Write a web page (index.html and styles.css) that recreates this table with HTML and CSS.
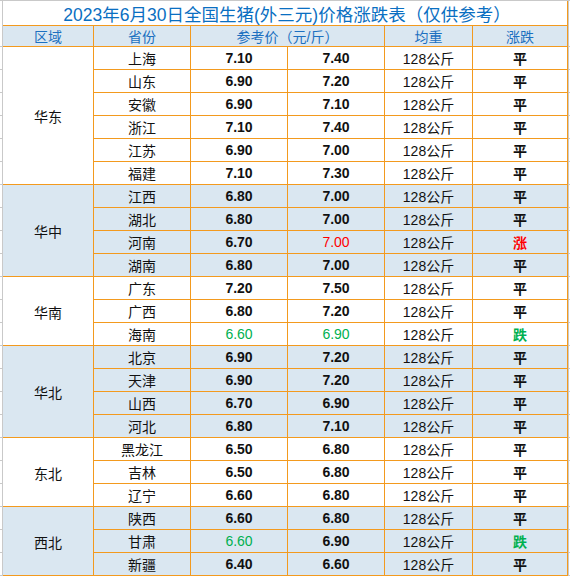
FILE: index.html
```html
<!DOCTYPE html>
<html lang="zh-CN">
<head>
<meta charset="utf-8">
<title>2023年6月30日全国生猪价格涨跌表</title>
<link rel="stylesheet" href="styles.css">
</head>
<body>
<div class="sheet">
  <div class="g gl gt"></div>
  <div class="c title">2023年6月30日全国生猪(外三元)价格涨跌表（仅供参考）</div>
  <div class="g gr gt"></div>

  <div class="g gl"></div>
  <div class="c hd b">区域</div>
  <div class="c hd b">省份</div>
  <div class="c hd b span2">参考价（元/斤）</div>
  <div class="c hd b">均重</div>
  <div class="c hd b">涨跌</div>
  <div class="g gr"></div>

  <!-- 华东 -->
  <div class="g gl"></div>
  <div class="c region r6">华东</div>
  <div class="c">上海</div><div class="c p">7.10</div><div class="c p">7.40</div><div class="c">128公斤</div><div class="c t">平</div>
  <div class="g gr"></div>
  <div class="g gl"></div>
  <div class="c">山东</div><div class="c p">6.90</div><div class="c p">7.20</div><div class="c">128公斤</div><div class="c t">平</div>
  <div class="g gr"></div>
  <div class="g gl"></div>
  <div class="c">安徽</div><div class="c p">6.90</div><div class="c p">7.10</div><div class="c">128公斤</div><div class="c t">平</div>
  <div class="g gr"></div>
  <div class="g gl"></div>
  <div class="c">浙江</div><div class="c p">7.10</div><div class="c p">7.40</div><div class="c">128公斤</div><div class="c t">平</div>
  <div class="g gr"></div>
  <div class="g gl"></div>
  <div class="c">江苏</div><div class="c p">6.90</div><div class="c p">7.00</div><div class="c">128公斤</div><div class="c t">平</div>
  <div class="g gr"></div>
  <div class="g gl"></div>
  <div class="c">福建</div><div class="c p">7.10</div><div class="c p">7.30</div><div class="c">128公斤</div><div class="c t">平</div>
  <div class="g gr"></div>

  <!-- 华中 -->
  <div class="g gl"></div>
  <div class="c region r4 b">华中</div>
  <div class="c b">江西</div><div class="c p b">6.80</div><div class="c p b">7.00</div><div class="c b">128公斤</div><div class="c t b">平</div>
  <div class="g gr"></div>
  <div class="g gl"></div>
  <div class="c b">湖北</div><div class="c p b">6.80</div><div class="c p b">7.00</div><div class="c b">128公斤</div><div class="c t b">平</div>
  <div class="g gr"></div>
  <div class="g gl"></div>
  <div class="c b">河南</div><div class="c p b">6.70</div><div class="c b red">7.00</div><div class="c b">128公斤</div><div class="c t b red">涨</div>
  <div class="g gr"></div>
  <div class="g gl"></div>
  <div class="c b">湖南</div><div class="c p b">6.80</div><div class="c p b">7.00</div><div class="c b">128公斤</div><div class="c t b">平</div>
  <div class="g gr"></div>

  <!-- 华南 -->
  <div class="g gl"></div>
  <div class="c region r3">华南</div>
  <div class="c">广东</div><div class="c p">7.20</div><div class="c p">7.50</div><div class="c">128公斤</div><div class="c t">平</div>
  <div class="g gr"></div>
  <div class="g gl"></div>
  <div class="c">广西</div><div class="c p">6.80</div><div class="c p">7.20</div><div class="c">128公斤</div><div class="c t">平</div>
  <div class="g gr"></div>
  <div class="g gl"></div>
  <div class="c">海南</div><div class="c green">6.60</div><div class="c green">6.90</div><div class="c">128公斤</div><div class="c t green">跌</div>
  <div class="g gr"></div>

  <!-- 华北 -->
  <div class="g gl"></div>
  <div class="c region r4 b">华北</div>
  <div class="c b">北京</div><div class="c p b">6.90</div><div class="c p b">7.20</div><div class="c b">128公斤</div><div class="c t b">平</div>
  <div class="g gr"></div>
  <div class="g gl"></div>
  <div class="c b">天津</div><div class="c p b">6.90</div><div class="c p b">7.20</div><div class="c b">128公斤</div><div class="c t b">平</div>
  <div class="g gr"></div>
  <div class="g gl"></div>
  <div class="c b">山西</div><div class="c p b">6.70</div><div class="c p b">6.90</div><div class="c b">128公斤</div><div class="c t b">平</div>
  <div class="g gr"></div>
  <div class="g gl"></div>
  <div class="c b">河北</div><div class="c p b">6.80</div><div class="c p b">7.10</div><div class="c b">128公斤</div><div class="c t b">平</div>
  <div class="g gr"></div>

  <!-- 东北 -->
  <div class="g gl"></div>
  <div class="c region r3">东北</div>
  <div class="c">黑龙江</div><div class="c p">6.50</div><div class="c p">6.80</div><div class="c">128公斤</div><div class="c t">平</div>
  <div class="g gr"></div>
  <div class="g gl"></div>
  <div class="c">吉林</div><div class="c p">6.50</div><div class="c p">6.80</div><div class="c">128公斤</div><div class="c t">平</div>
  <div class="g gr"></div>
  <div class="g gl"></div>
  <div class="c">辽宁</div><div class="c p">6.60</div><div class="c p">6.80</div><div class="c">128公斤</div><div class="c t">平</div>
  <div class="g gr"></div>

  <!-- 西北 -->
  <div class="g gl"></div>
  <div class="c region r3 b">西北</div>
  <div class="c b">陕西</div><div class="c p b">6.60</div><div class="c p b">6.80</div><div class="c b">128公斤</div><div class="c t b">平</div>
  <div class="g gr"></div>
  <div class="g gl"></div>
  <div class="c b">甘肃</div><div class="c b green">6.60</div><div class="c p b">6.90</div><div class="c b">128公斤</div><div class="c t b green">跌</div>
  <div class="g gr"></div>
  <div class="g gl"></div>
  <div class="c b">新疆</div><div class="c p b">6.40</div><div class="c p b">6.60</div><div class="c b">128公斤</div><div class="c t b">平</div>
  <div class="g gr"></div>
</div>
</body>
</html>
```

FILE: styles.css
```css
html, body {
  margin: 0;
  padding: 0;
  background: #ffffff;
}

body {
  width: 570px;
  height: 579px;
  overflow: hidden;
  font-family: "Liberation Sans", "Noto Sans CJK SC", sans-serif;
  font-size: 14px;
  color: #111111;
}

.sheet {
  display: grid;
  grid-template-columns: 3px 91px 97px 97px 97px 88px 95px 2px;
  grid-template-rows: 25px 21px repeat(23, 23px);
  border-top: 1px solid #c9c9c9;
}

.c {
  box-sizing: border-box;
  display: flex;
  align-items: center;
  justify-content: center;
  border-right: 1px solid #f39a1e;
  border-bottom: 1px solid #f39a1e;
  white-space: nowrap;
  background: #ffffff;
}

.g {
  box-sizing: border-box;
  border-bottom: 1px solid #c9c9c9;
}

.gl {
  border-right: 1px solid #c9c9c9;
}

.gr {
  border-left: 1px solid #c9c9c9;
}

.gt {
  border-bottom: none;
}

.title {
  grid-column: span 6;
  color: #0a6fc2;
  font-size: 17.5px;
  padding-top: 1px;
  padding-left: 4px;
}

.hd {
  color: #1c70c0;
}

.span2 {
  grid-column: span 2;
}

.b {
  background: #dae7f1;
}

.region {
  padding-top: 1px;
}

.r6 { grid-row: span 6; }
.r4 { grid-row: span 4; }
.r3 { grid-row: span 3; }

.p {
  font-weight: bold;
}

.t {
  font-weight: bold;
}

.red {
  color: #ff0000;
}

.green {
  color: #00b050;
}
```
